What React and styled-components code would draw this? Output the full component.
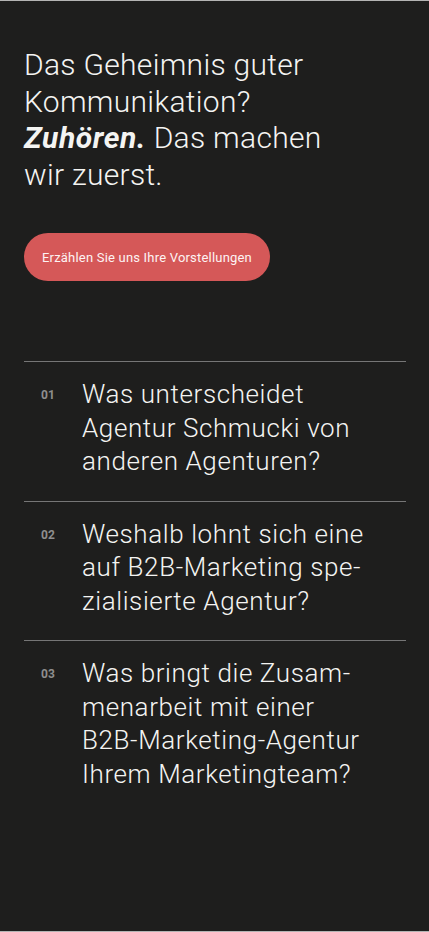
import React from "react";
import styled, { createGlobalStyle } from "styled-components";

const GlobalStyle = createGlobalStyle`
  html, body {
    margin: 0;
    padding: 0;
    background: #1e1e1d;
  }
  body {
    font-family: Roboto, "Liberation Sans", sans-serif;
    color: #f4f4f2;
  }
  * { box-sizing: border-box; }
`;

const questions = [
  { nr: "01", text: "Was unterscheidet Agentur Schmucki von anderen Agenturen?" },
  { nr: "02", text: "Weshalb lohnt sich eine auf B2B-Marketing spe\u00adzialisierte Agentur?" },
  { nr: "03", text: "Was bringt die Zusam\u00admenarbeit mit einer B2B-Marketing-Agentur Ihrem Marketingteam?" },
];

const App = () => {
  return (
    <>
      <GlobalStyle />
      <Page>
        <Intro>
          <Headline>
            Das Geheimnis guter Kommunikation? <strong>Zuhören.</strong> Das machen wir zuerst.
          </Headline>
          <CtaButton>Erzählen Sie uns Ihre Vorstellungen</CtaButton>
        </Intro>
        <FaqList>
          {questions.map((q) => (
            <FaqItem key={q.nr}>
              <Number>{q.nr}</Number>
              <Question lang="de">{q.text}</Question>
            </FaqItem>
          ))}
        </FaqList>
      </Page>
    </>
  );
};

export default App;

const Page = styled.div`
  min-height: 932px;
  border-top: 1px solid #b4b4b4;
  border-bottom: 1px solid #b4b4b4;
  padding: 0 23px 0 24px;
  display: flex;
  flex-direction: column;
`;

const Intro = styled.section`
  padding-top: 46px;
  display: flex;
  flex-direction: column;
  align-items: flex-start;
`;

const Headline = styled.h1`
  margin: 0;
  max-width: 340px;
  font-size: 30px;
  line-height: 36.5px;
  font-weight: 300;
  letter-spacing: 0.3px;

  strong {
    display: inline-block;
    line-height: 36.5px;
    font-weight: 700;
    font-style: italic;
    letter-spacing: 0.6px;
  }
`;

const CtaButton = styled.button`
  margin-top: 40px;
  height: 48px;
  width: 246px;
  border: none;
  border-radius: 24px;
  background: #d55858;
  color: #fdf3f3;
  font-family: Roboto, "Liberation Sans", sans-serif;
  font-size: 13px;
  font-weight: 400;
  letter-spacing: 0.2px;
  cursor: pointer;
`;

const FaqList = styled.div`
  margin-top: 80px;
  display: flex;
  flex-direction: column;
`;

const FaqItem = styled.div`
  border-top: 1px solid #767676;
  padding: 16px 0 22px;
  display: grid;
  grid-template-columns: 58px 290px;
  align-items: start;
`;

const Number = styled.span`
  padding: 10px 0 0 17px;
  font-size: 12px;
  font-weight: 700;
  color: #8e8e8e;
`;

const Question = styled.h2`
  margin: 0;
  font-size: 26px;
  line-height: 33.5px;
  font-weight: 300;
  letter-spacing: 0.6px;
  hyphens: manual;
`;
